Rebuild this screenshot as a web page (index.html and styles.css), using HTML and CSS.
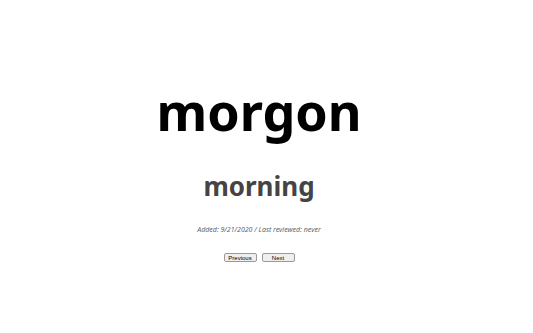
FILE: index.html
```html
<!DOCTYPE html>
<html>
<head>
<meta charset="utf-8">
<link rel="stylesheet" href="styles.css">
</head>
<body>
<div class="card">
  <div class="word">morgon</div>
  <div class="translation">morning</div>
  <div class="meta">Added: 9/21/2020 / Last reviewed: never</div>
  <div class="nav">
    <button class="btn">Previous</button>
    <button class="btn">Next</button>
  </div>
</div>
</body>
</html>
```
FILE: styles.css
```css
html, body { margin: 0; padding: 0; background: #fff; }
body { font-family: "Noto Sans", sans-serif; }
.card {
  width: 518px;
  display: flex;
  flex-direction: column;
  align-items: center;
  padding-top: 75px;
}
.word {
  font-size: 52px;
  font-weight: 700;
  color: #000;
  line-height: 72px;
}
.translation {
  font-size: 26px;
  font-weight: 700;
  color: #444;
  line-height: 36px;
  margin-top: 21px;
}
.meta {
  font-size: 7px;
  font-style: italic;
  color: #666;
  margin-top: 21px;
  line-height: 10px;
}
.nav {
  display: flex;
  gap: 5px;
  margin-top: 18px;
}
.btn {
  font-family: "Liberation Sans", Arial, sans-serif;
  font-size: 6px;
  width: 33px;
  height: 9px;
  padding: 0;
  background: #efefef;
  border: 1px solid #999;
  border-radius: 2px;
  color: #000;
}
```
